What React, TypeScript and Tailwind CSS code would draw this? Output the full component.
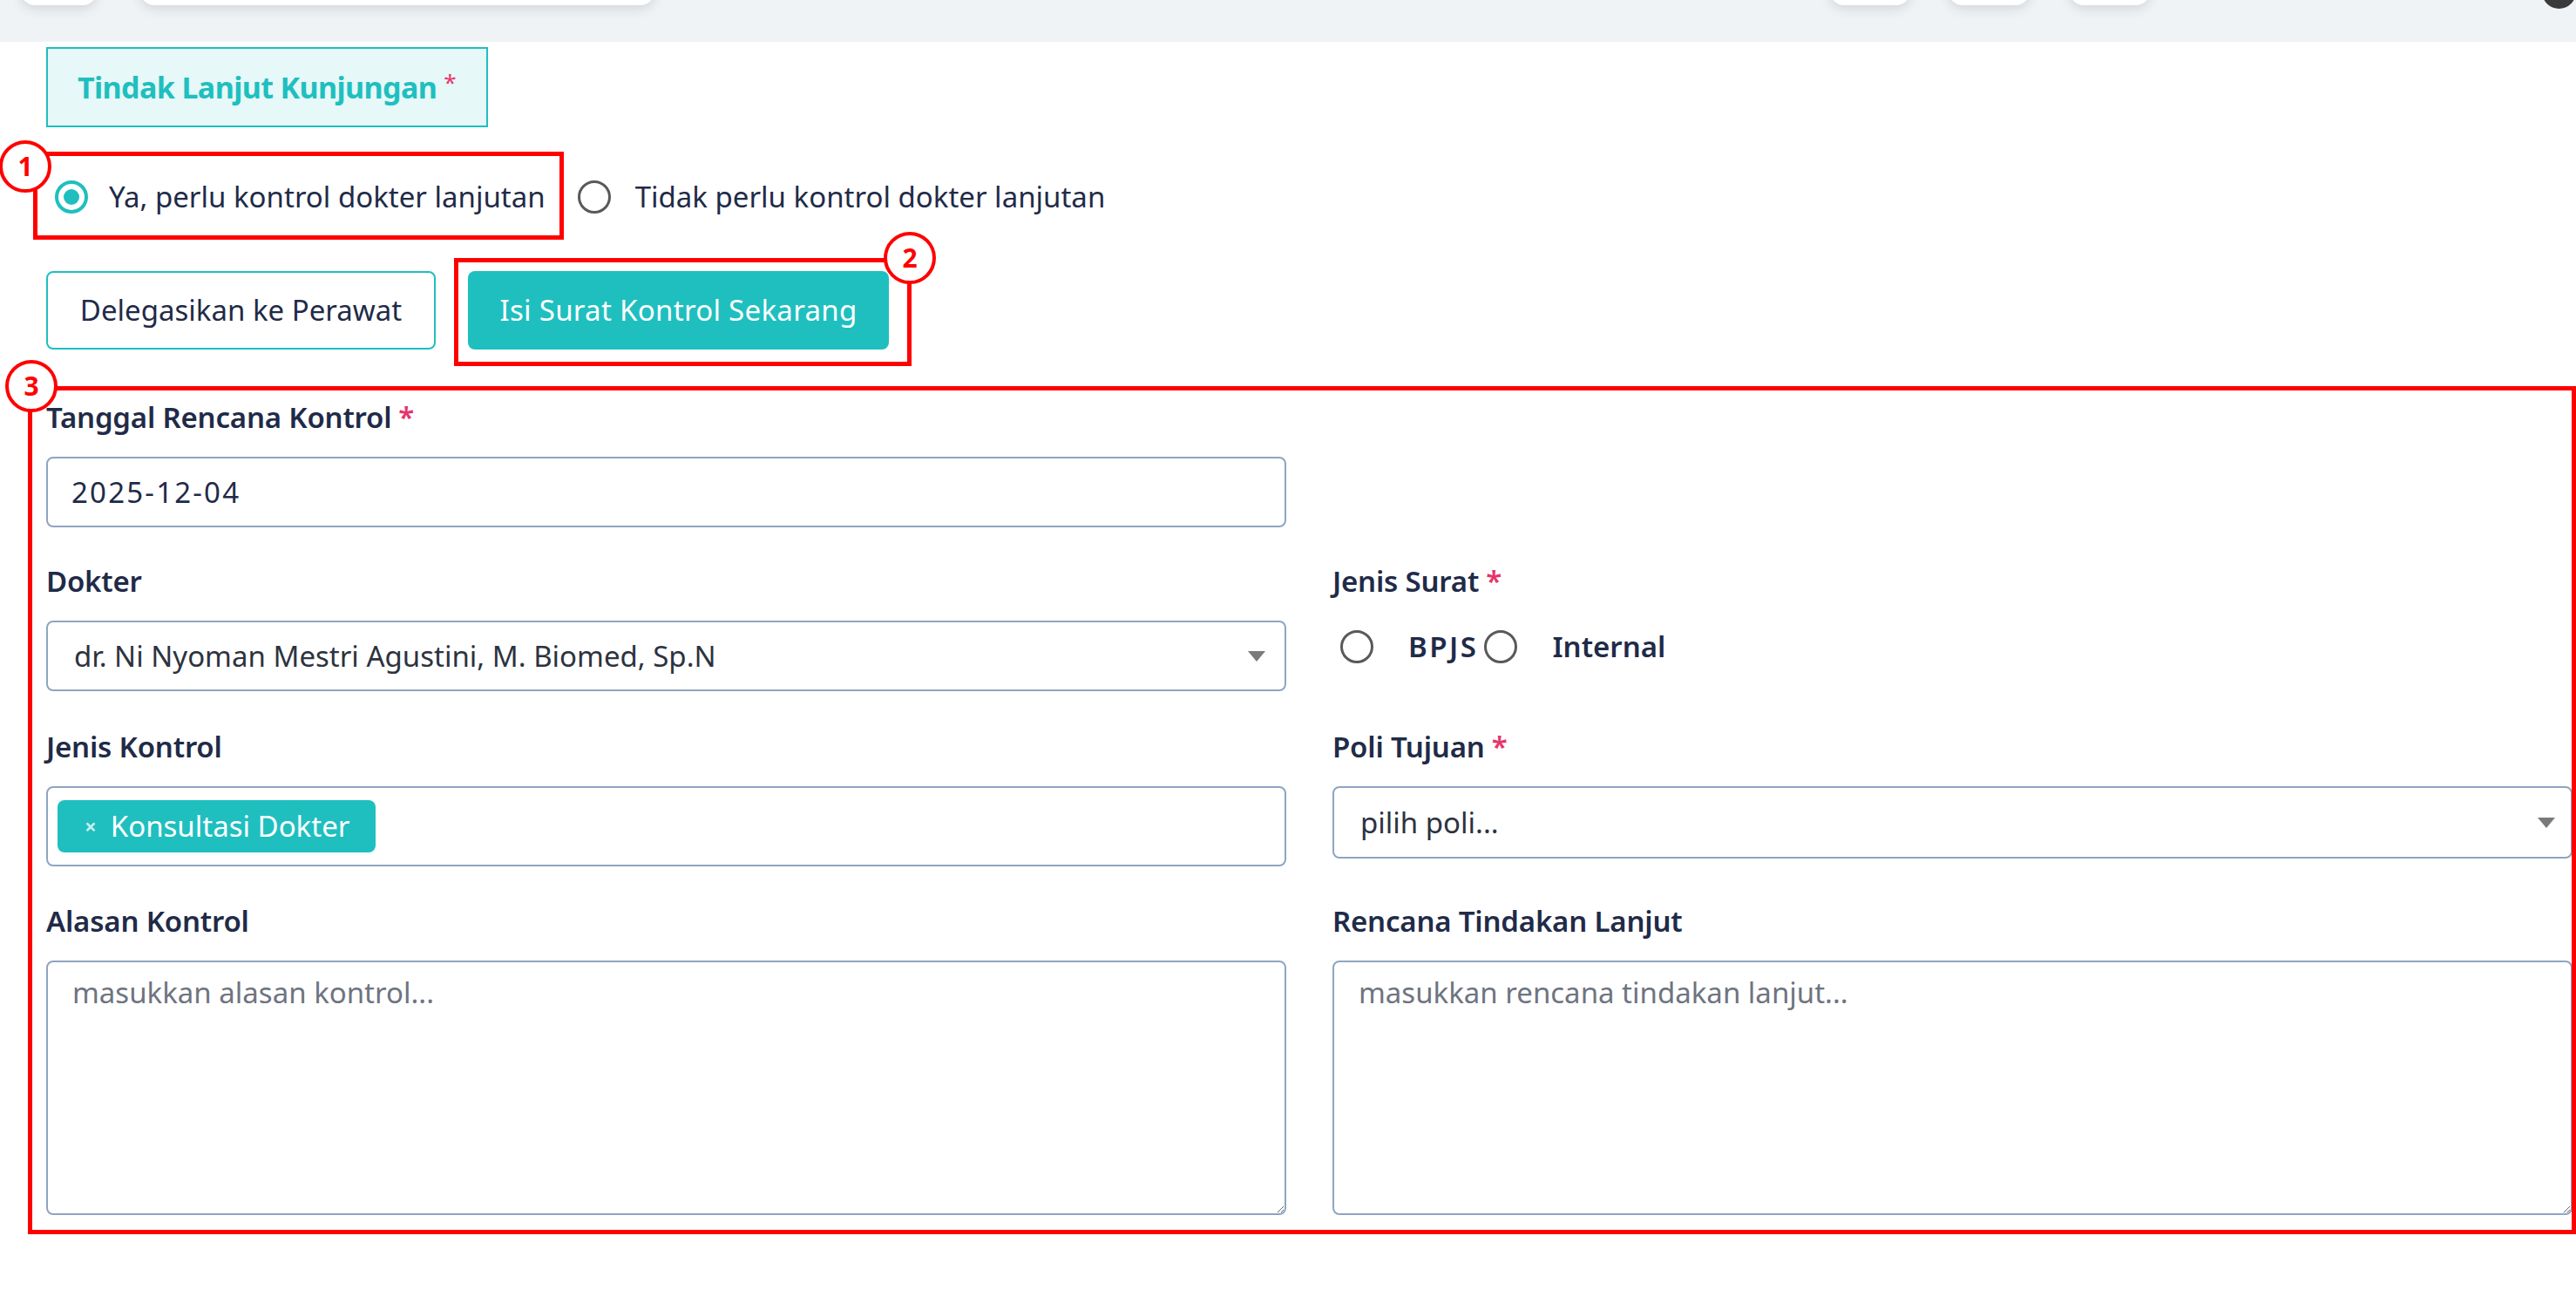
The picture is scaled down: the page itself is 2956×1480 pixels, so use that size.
import React from "react";

function Radio({ checked }: { checked?: boolean }) {
  return checked ? (
    <span className="w-[38px] h-[38px] rounded-full border-[4px] border-[#1fbfbf] flex items-center justify-center shrink-0">
      <span className="block w-[18px] h-[18px] rounded-full bg-[#1fbfbf]" />
    </span>
  ) : (
    <span className="block w-[38px] h-[38px] rounded-full border-[3px] border-[#595959] shrink-0" />
  );
}

function Label({ children, req }: { children: React.ReactNode; req?: boolean }) {
  return (
    <div className="h-[44px] leading-[44px] text-[33px] font-semibold text-[#1f2b48] mb-[23px] tracking-[-0.2px]">
      {children}
      {req && <span className="text-[#e8336b] ml-[8px]">*</span>}
    </div>
  );
}

function Caret() {
  return (
    <svg width="20" height="12" viewBox="0 0 20 12" className="shrink-0">
      <polygon points="0,0 20,0 10,12" fill="#7a7a7a" />
    </svg>
  );
}

function Badge({ n }: { n: string }) {
  return (
    <div className="w-[60px] h-[60px] rounded-full border-[4px] border-[#ff0000] bg-white flex items-center justify-center text-[#ff0000] font-bold text-[30px] leading-none">
      {n}
    </div>
  );
}

export default function App() {
  return (
    <div className="w-[2956px] h-[1480px] bg-white relative overflow-hidden font-['Noto_Sans',sans-serif] text-[#1f2b48]">
      {/* top bar */}
      <div className="h-[48px] bg-[#eff3f6] flex items-start">
        <div className="ml-[24px] w-[88px] h-[40px] -mt-[34px] bg-white rounded-[16px] shadow-[0_4px_14px_rgba(0,0,0,0.12)]" />
        <div className="ml-[50px] w-[598px] h-[40px] -mt-[34px] bg-white rounded-[16px] shadow-[0_4px_14px_rgba(0,0,0,0.12)]" />
        <div className="ml-[1349px] w-[93px] h-[40px] -mt-[34px] bg-white rounded-[16px] shadow-[0_4px_14px_rgba(0,0,0,0.12)]" />
        <div className="ml-[44px] w-[94px] h-[40px] -mt-[34px] bg-white rounded-[16px] shadow-[0_4px_14px_rgba(0,0,0,0.12)]" />
        <div className="ml-[46px] w-[93px] h-[40px] -mt-[34px] bg-white rounded-[16px] shadow-[0_4px_14px_rgba(0,0,0,0.12)]" />
        <div className="ml-[450px] w-[40px] h-[40px] -mt-[30px] bg-[#3a3a3a] rounded-full" />
      </div>

      <div className="pl-[53px] pt-[6px]">
        {/* section header */}
        <div className="w-[507px] h-[92px] border-[2px] border-[#1fbfbf] bg-[#e6f8f8] flex items-center pl-[34px]">
          <span className="text-[34px] font-bold text-[#1fbfbf] tracking-[-0.6px]">Tindak Lanjut Kunjungan</span>
          <span className="text-[26px] text-[#e8336b] ml-[8px] -mt-[12px]">*</span>
        </div>

        {/* radio row */}
        <div className="mt-[58px] h-[44px] flex items-center text-[33px]">
          <span className="ml-[10px]">
            <Radio checked />
          </span>
          <span className="ml-[24px]">Ya, perlu kontrol dokter lanjutan</span>
          <span className="ml-[37px]">
            <Radio />
          </span>
          <span className="ml-[28px]">Tidak perlu kontrol dokter lanjutan</span>
        </div>

        {/* buttons */}
        <div className="mt-[63px] flex gap-[37px]">
          <button className="w-[447px] h-[90px] border-[2px] border-[#1fbfbf] rounded-[8px] bg-white text-[33px] text-[#1f2b48]">
            Delegasikan ke Perawat
          </button>
          <button className="w-[483px] h-[90px] rounded-[8px] bg-[#1fbfbf] text-[33px] tracking-[0.3px] text-white">
            Isi Surat Kontrol Sekarang
          </button>
        </div>

        {/* form */}
        <div className="mt-[56px] w-[2899px] grid grid-cols-2 gap-x-[53px]">
          <div>
            <Label req>Tanggal Rencana Kontrol</Label>
            <div className="h-[81px] border-[2px] border-[#8ea5c2] rounded-[8px] flex items-center pl-[27px] text-[33px] tracking-[2.2px] text-[#1f2b48]">
              2025-12-04
            </div>
          </div>
          <div />

          <div className="mt-[40px]">
            <Label>Dokter</Label>
            <div className="h-[81px] border-[2px] border-[#8ea5c2] rounded-[8px] flex items-center pl-[30px] pr-[22px] text-[33px] text-[#2d3340]">
              <span className="flex-1">dr. Ni Nyoman Mestri Agustini, M. Biomed, Sp.N</span>
              <Caret />
            </div>
          </div>
          <div className="mt-[40px]">
            <Label req>Jenis Surat</Label>
            <div className="h-[60px] flex items-center text-[33px] font-semibold">
              <span className="ml-[9px]">
                <Radio />
              </span>
              <span className="ml-[40px] tracking-[2.5px]">BPJS</span>
              <span className="ml-[7px]">
                <Radio />
              </span>
              <span className="ml-[40px]">Internal</span>
            </div>
          </div>

          <div className="mt-[42px]">
            <Label>Jenis Kontrol</Label>
            <div className="h-[92px] border-[2px] border-[#8ea5c2] rounded-[8px] flex items-center pl-[11px]">
              <div className="h-[60px] rounded-[8px] bg-[#1fbfbf] flex items-center pl-[31px] pr-[30px] text-white text-[33px]">
                <span className="text-[#c9eeee] text-[24px] font-bold mr-[16px]">×</span>
                Konsultasi Dokter
              </div>
            </div>
          </div>
          <div className="mt-[42px]">
            <Label req>Poli Tujuan</Label>
            <div className="h-[83px] border-[2px] border-[#8ea5c2] rounded-[8px] flex items-center pl-[30px] pr-[18px] text-[33px] text-[#2d3340]">
              <span className="flex-1">pilih poli...</span>
              <Caret />
            </div>
          </div>

          <div className="mt-[41px]">
            <Label>Alasan Kontrol</Label>
            <textarea
              placeholder="masukkan alasan kontrol..."
              className="block w-full h-[292px] border-[2px] border-[#8ea5c2] rounded-[8px] px-[28px] pt-[13px] text-[33px] leading-[44px] placeholder:text-[#6e7480] font-['Noto_Sans',sans-serif] outline-none"
            />
          </div>
          <div className="mt-[41px]">
            <Label>Rencana Tindakan Lanjut</Label>
            <textarea
              placeholder="masukkan rencana tindakan lanjut..."
              className="block w-full h-[292px] border-[2px] border-[#8ea5c2] rounded-[8px] px-[28px] pt-[13px] text-[33px] leading-[44px] placeholder:text-[#6e7480] font-['Noto_Sans',sans-serif] outline-none"
            />
          </div>
        </div>
      </div>

      {/* annotations */}
      <div className="absolute left-[38px] top-[174px] w-[609px] h-[101px] border-[5px] border-[#ff0000]" />
      <div className="absolute left-[-1px] top-[161px]">
        <Badge n="1" />
      </div>
      <div className="absolute left-[521px] top-[296px] w-[525px] h-[124px] border-[5px] border-[#ff0000]" />
      <div className="absolute left-[1014px] top-[266px]">
        <Badge n="2" />
      </div>
      <div className="absolute left-[32px] top-[443px] w-[2924px] h-[973px] border-[5px] border-[#ff0000]" />
      <div className="absolute left-[6px] top-[413px]">
        <Badge n="3" />
      </div>
    </div>
  );
}
